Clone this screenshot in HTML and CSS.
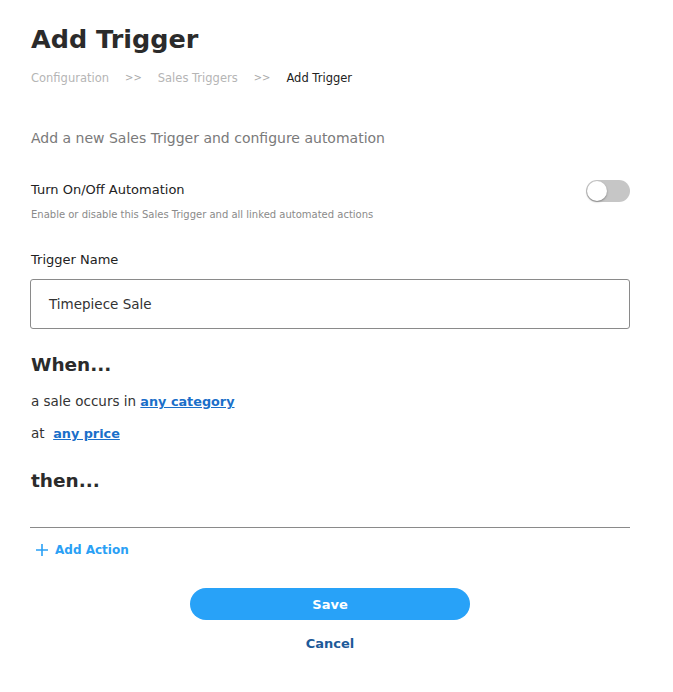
FILE: index.html
```html
<!DOCTYPE html>
<html>
<head>
<meta charset="utf-8">
<link rel="stylesheet" href="styles.css">
</head>
<body>
<main class="page">
  <h1 class="title">Add Trigger</h1>
  <nav class="crumbs">
    <span class="crumb">Configuration</span>
    <span class="sep">&gt;&gt;</span>
    <span class="crumb">Sales Triggers</span>
    <span class="sep">&gt;&gt;</span>
    <span class="crumb current">Add Trigger</span>
  </nav>
  <p class="subtitle">Add a new Sales Trigger and configure automation</p>

  <div class="toggle-row">
    <div class="toggle-text">
      <div class="label">Turn On/Off Automation</div>
      <div class="hint">Enable or disable this Sales Trigger and all linked automated actions</div>
    </div>
    <div class="switch"><span class="knob"></span></div>
  </div>

  <div class="label name-label">Trigger Name</div>
  <div class="input">Timepiece Sale</div>

  <h2 class="section when">When...</h2>
  <p class="cond">a sale occurs in <a class="link">any category</a></p>
  <p class="cond">at &nbsp;<a class="link">any price</a></p>

  <h2 class="section then">then...</h2>
  <div class="rule"></div>
  <div class="add-action">
    <svg width="14" height="14" viewBox="0 0 14 14"><path d="M7 1v12M1 7h12" stroke="#2aa0f5" stroke-width="1.6" fill="none"/></svg>
    <span>Add Action</span>
  </div>

  <div class="actions">
    <button class="save">Save</button>
    <button class="cancel">Cancel</button>
  </div>
</main>
</body>
</html>
```
FILE: styles.css
```css
* { box-sizing: border-box; }
body {
  margin: 0;
  background: #fff;
  font-family: "DejaVu Sans", "Open Sans", sans-serif;
  color: #333;
}
.page {
  width: 600px;
  margin-left: 30px;
  padding-top: 21px;
}
.title {
  margin: 0 0 0 1px;
  font-size: 25.5px;
  font-weight: 700;
  color: #2b2b2b;
  line-height: 36px;
}
.crumbs {
  display: flex;
  margin-top: 13px;
  margin-left: 1px;
  font-size: 11.5px;
  line-height: 16px;
  color: #b5b5b5;
}
.crumbs .sep { margin: 0 16px; font-size: 10px; color: #aaa; }
.crumbs .current { color: #222; font-weight: 500; }
.subtitle {
  margin: 42px 0 0 1px;
  font-size: 14px;
  line-height: 20px;
  color: #7a7a7a;
}
.toggle-row {
  display: flex;
  justify-content: space-between;
  align-items: flex-start;
  margin-top: 33px;
}
.label {
  font-size: 13px;
  line-height: 18px;
  color: #222;
  margin-left: 1px;
}
.hint {
  margin-top: 10px;
  font-size: 10px;
  line-height: 12px;
  color: #8a8a8a;
  margin-left: 1px;
}
.switch {
  width: 44px;
  height: 22px;
  border-radius: 11px;
  background: #c6c6c6;
  margin-top: -1px;
  position: relative;
}
.knob {
  position: absolute;
  left: 1px;
  top: 1px;
  width: 20px;
  height: 20px;
  border-radius: 50%;
  background: #fff;
  box-shadow: 0 1px 2px rgba(0,0,0,0.35);
}
.name-label { margin-top: 30px; }
.input {
  margin-top: 10px;
  height: 50px;
  border: 1px solid #8a8a8a;
  border-radius: 3px;
  padding: 0 18px;
  display: flex;
  align-items: center;
  font-size: 13.5px;
  color: #333;
}
.section {
  margin: 0 0 0 1px;
  font-size: 18.5px;
  font-weight: 700;
  color: #2b2b2b;
  line-height: 26px;
}
.when { margin-top: 23px; }
.cond {
  margin: 0 0 0 1px;
  font-size: 13.5px;
  line-height: 20px;
  color: #333;
}
.when + .cond { margin-top: 13px; }
.cond + .cond { margin-top: 11px; }
.link {
  color: #1a6fc9;
  font-weight: 700;
  font-size: 12.8px;
  text-decoration: underline;
}
.then { margin-top: 24px; }
.rule {
  margin-top: 33px;
  height: 1px;
  background: #8a8a8a;
}
.add-action {
  margin-top: 13px;
  margin-left: 5px;
  display: flex;
  align-items: center;
  gap: 6px;
  color: #2aa0f5;
  font-size: 12px;
  font-weight: 600;
  line-height: 18px;
}
.actions {
  display: flex;
  flex-direction: column;
  align-items: center;
  margin-top: 29px;
}
.save {
  width: 280px;
  height: 32px;
  border: none;
  border-radius: 16px;
  background: #28a2f8;
  color: #fff;
  font-family: inherit;
  font-size: 13px;
  font-weight: 700;
}
.cancel {
  margin-top: 14px;
  border: none;
  background: none;
  font-family: inherit;
  font-size: 13px;
  font-weight: 700;
  color: #1d5a99;
  padding: 0;
  line-height: 20px;
}
```
